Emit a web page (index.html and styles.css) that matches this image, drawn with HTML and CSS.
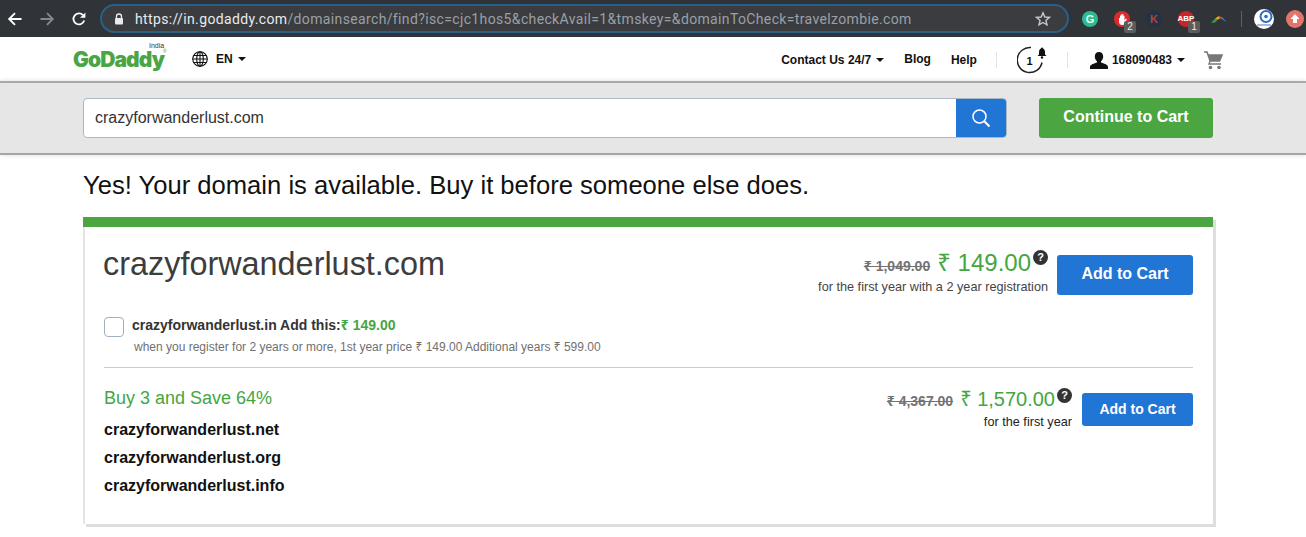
FILE: index.html
```html
<!DOCTYPE html>
<html lang="en">
<head>
<meta charset="utf-8">
<title>GoDaddy Domain Search</title>
<link rel="stylesheet" href="styles.css">
</head>
<body>
<div class="browser">
  <svg class="nav-icon back" width="16" height="16" viewBox="0 0 16 16"><path d="M14.5 8H2.5M8 2.2 2.2 8 8 13.8" fill="none" stroke="#fff" stroke-width="1.9"/></svg>
  <svg class="nav-icon fwd" width="16" height="16" viewBox="0 0 16 16"><path d="M1.5 8h12M8 2.2 13.8 8 8 13.8" fill="none" stroke="#85878a" stroke-width="1.9"/></svg>
  <svg class="nav-icon reload" width="16" height="16" viewBox="0 0 16 16"><path d="M13.2 9.6A5.5 5.5 0 1 1 12 4.2" fill="none" stroke="#fff" stroke-width="1.8"/><path d="M14.4 1.4v5.4H9z" fill="#fff"/></svg>
  <div class="omnibox">
    <svg class="lock" width="10" height="12" viewBox="0 0 10 12"><path d="M2.5 5V3.5a2.5 2.5 0 0 1 5 0V5" fill="none" stroke="#e8eaed" stroke-width="1.3"/><rect x="1" y="5" width="8" height="6.5" rx="1" fill="#e8eaed"/></svg>
    <div class="url"><span class="url-host">https://in.godaddy.com</span><span class="url-path">/domainsearch/find?isc=cjc1hos5&amp;checkAvail=1&amp;tmskey=&amp;domainToCheck=travelzombie.com</span></div>
    <svg class="star" width="16" height="16" viewBox="0 0 16 16"><path d="M8 1.8 9.8 6l4.6.4-3.5 3 1.1 4.5L8 11.5l-4 2.4 1.1-4.5-3.5-3L6.200 6z" fill="none" stroke="#c4c7c9" stroke-width="1.4"/></svg>
  </div>
  <div class="extensions">
    <div class="ext ext-g">G</div>
    <div class="ext ext-hand"><svg width="16" height="16" viewBox="0 0 16 16"><circle cx="8" cy="8" r="8" fill="#de2a2a"/><path d="M5 7v3.500c0 2 1.300 3.500 3.200 3.500s2.800-1 3.300-2.500l1.300-3.500-1-.4-1.300 2V5H9.700V3.500H8.500V3H7.300v1.500H6V7z" fill="#fff"/></svg><span class="badge">2</span></div>
    <div class="ext ext-k">K</div>
    <div class="ext ext-abp"><svg width="16" height="16" viewBox="0 0 16 16"><circle cx="8" cy="8" r="8" fill="#c8242c"/></svg><span class="abp-label">ABP</span><span class="badge">1</span></div>
    <svg class="ext-arc" width="18" height="10" viewBox="0 0 18 10"><path d="M1 9 5 4.500l3 1-3 3z" fill="#3e9b46"/><path d="M5 4.500 9 2l1 2.500-2 1z" fill="#e0b128"/><path d="M9 2l3 1 0 2-2-.500z" fill="#c9473c"/><path d="M12 3l5 5.500-5-3.500z" fill="#5a82c7"/></svg>
    <div class="ext-divider"></div>
    <svg class="ext-swirl" width="20" height="20" viewBox="0 0 20 20"><circle cx="10" cy="10" r="10" fill="#fff"/><circle cx="12" cy="7.500" r="5.500" fill="none" stroke="#2b6cc4" stroke-width="2"/><circle cx="12" cy="7.500" r="1.800" fill="#2b6cc4"/><path d="M3 16h14" stroke="#8aa6cf" stroke-width="1.500"/></svg>
    <svg class="ext-up" width="18" height="18" viewBox="0 0 18 18"><circle cx="9" cy="9" r="9" fill="#e5746b"/><path d="M9 4 13.500 9H11v4H7V9H4.500z" fill="#fff"/></svg>
  </div>
</div>

<header class="site-header">
  <div class="logo"><span class="logo-india">India</span><span class="logo-word">GoDaddy</span><span class="logo-reg">®</span></div>
  <div class="lang">
    <svg width="16" height="16" viewBox="0 0 16 16" fill="none" stroke="#111" stroke-width="1.100"><circle cx="8" cy="8" r="7.300"/><ellipse cx="8" cy="8" rx="3.300" ry="7.300"/><path d="M8 .7v14.600M.7 8h14.600M1.700 4.500h12.600M1.700 11.500h12.600"/></svg>
    <span class="lang-text">EN</span><span class="caret"></span>
  </div>
  <nav class="nav">
    <span class="nav-item">Contact Us 24/7<span class="caret"></span></span>
    <span class="nav-item nav-blog">Blog</span>
    <span class="nav-item nav-help">Help</span>
    <span class="nav-sep"></span>
    <svg class="bell" width="32" height="30" viewBox="0 0 32 30"><path d="M14 2.600A12.500 12.500 0 1 0 25 17.500" fill="none" stroke="#222" stroke-width="1.500"/><path d="M25 2.500a1 1 0 0 1 1 1c1.500.5 2 2 2 3.500v2.500l1.500 1.500h-9l1.500-1.500V7c0-1.500.5-3 2-3.500a1 1 0 0 1 1-1z" fill="#111"/><circle cx="25" cy="12.500" r="1.200" fill="#111"/><text x="12.500" y="19.500" text-anchor="middle" class="bell-num">1</text></svg>
    <span class="nav-sep nav-sep2"></span>
    <svg class="user" width="18" height="17" viewBox="0 0 18 17"><path d="M9 0c2.700 0 4.200 2 4.200 4.500 0 2-1 3.800-2.200 4.800v1.200c2.500 1 7 1.800 7 4.500v2H0v-2c0-2.700 4.500-3.500 7-4.500V9.300C5.800 8.300 4.800 6.500 4.800 4.500 4.800 2 6.300 0 9 0z" fill="#111"/></svg>
    <span class="nav-item nav-account">168090483<span class="caret"></span></span>
    <svg class="cart" width="19" height="19" viewBox="0 0 19 19"><path d="M0 1h3l3.200 9h9.300L18 4H4.500" fill="none" stroke="#777" stroke-width="1.600"/><path d="M4.500 4H18l-2.500 6H6.500z" fill="#777"/><path d="M6 10l-1 3h12" fill="none" stroke="#777" stroke-width="1.400"/><circle cx="6.500" cy="16.500" r="1.800" fill="#777"/><circle cx="15" cy="16.500" r="1.800" fill="#777"/></svg>
  </nav>
</header>

<section class="search-band">
  <div class="search-box">
    <div class="search-input">crazyforwanderlust.com</div>
    <div class="search-btn"><svg width="20" height="20" viewBox="0 0 20 20"><circle cx="8.500" cy="8.500" r="6.500" fill="none" stroke="#fff" stroke-width="1.500"/><path d="M13.300 13.300 18.500 18.500" stroke="#fff" stroke-width="2"/></svg></div>
  </div>
  <div class="continue-btn">Continue to Cart</div>
</section>

<main class="content">
  <h1 class="headline">Yes! Your domain is available. Buy it before someone else does.</h1>
  <div class="card">
    <div class="card-bar"></div>
    <div class="card-body">
      <div class="row-main">
        <div class="domain-title">crazyforwanderlust.com</div>
        <div class="price-group">
          <div class="price-block price-block-lg">
            <div class="price-line"><span class="old-price">₹ 1,049.00</span><span class="new-price">₹ 149.00</span><span class="help-dot">?</span></div>
            <div class="price-note">for the first year with a 2 year registration</div>
          </div>
          <div class="btn btn-lg">Add to Cart</div>
        </div>
      </div>
      <div class="addon">
        <span class="checkbox"></span>
        <div class="addon-text">
          <div class="addon-title">crazyforwanderlust.in Add this:<span class="addon-price">₹ 149.00</span></div>
          <div class="addon-note">when you register for 2 years or more, 1st year price ₹ 149.00 Additional years ₹ 599.00</div>
        </div>
      </div>
      <div class="bundle">
        <div class="bundle-left">
          <div class="bundle-title">Buy 3 and Save 64%</div>
          <div class="bundle-domain">crazyforwanderlust.net</div>
          <div class="bundle-domain">crazyforwanderlust.org</div>
          <div class="bundle-domain">crazyforwanderlust.info</div>
        </div>
        <div class="price-group">
          <div class="price-block price-block-sm">
            <div class="price-line"><span class="old-price">₹ 4,367.00</span><span class="new-price new-price-sm">₹ 1,570.00</span><span class="help-dot">?</span></div>
            <div class="price-note price-note-dark">for the first year</div>
          </div>
          <div class="btn btn-sm">Add to Cart</div>
        </div>
      </div>
    </div>
  </div>
</main>
</body>
</html>
```
FILE: styles.css
```css
* { box-sizing: border-box; }
html, body { margin: 0; padding: 0; }
body {
  width: 1306px;
  height: 537px;
  overflow: hidden;
  background: #fff;
  font-family: "Liberation Sans", "Noto Sans", Arial, sans-serif;
  color: #111;
}

/* Browser chrome */
.browser {
  height: 37px;
  background: #303337;
  display: flex;
  align-items: center;
}
.nav-icon { flex: none; }
.back { margin-left: 7px; }
.fwd { margin-left: 16px; }
.reload { margin-left: 16px; }
.omnibox {
  flex: none;
  width: 969px;
  height: 29px;
  margin-left: 13px;
  padding: 0 16px 0 12px;
  border: 2px solid #2a5f88;
  border-radius: 15px;
  background: #3a3c40;
  display: flex;
  align-items: center;
}
.lock { flex: none; }
.url {
  flex: 1;
  margin-left: 11px;
  font-family: "Roboto", "Liberation Sans", sans-serif;
  font-size: 14px;
  letter-spacing: .36px;
  white-space: nowrap;
}
.url-host { color: #e8eaed; }
.url-path { color: #9aa0a6; }
.star { flex: none; }
.extensions {
  flex: 1;
  display: flex;
  align-items: center;
  padding-left: 13px;
}
.ext {
  flex: none;
  position: relative;
  width: 16px;
  height: 16px;
  border-radius: 50%;
  font-size: 11px;
  font-weight: 700;
  text-align: center;
  line-height: 16px;
}
.ext svg { display: block; }
.ext-g { background: #2fb98f; color: #e8fff6; }
.ext-hand { margin-left: 16px; }
.ext-k { margin-left: 16px; background: #253245; color: #a8483f; }
.ext-abp { margin-left: 16px; }
.abp-label {
  position: absolute;
  left: -1px;
  top: 0;
  width: 18px;
  font-size: 8px;
  color: #fff;
  line-height: 16px;
}
.badge {
  position: absolute;
  left: 10px;
  top: 10px;
  width: 12px;
  height: 12px;
  border-radius: 2px;
  background: #5c5c5c;
  color: #eee;
  font-size: 10px;
  font-weight: 400;
  line-height: 12px;
}
.ext-arc { flex: none; margin-left: 16px; }
.ext-divider { flex: none; width: 1px; height: 16px; margin-left: 13px; background: #5f6063; }
.ext-swirl { flex: none; margin-left: 12px; }
.ext-up { flex: none; margin-left: 12px; }

/* Site header */
.site-header {
  height: 44px;
  padding: 0 83px 0 73px;
  display: flex;
  align-items: center;
}
.logo {
  position: relative;
  width: 119px;
  flex: none;
  height: 30px;
  display: flex;
  align-items: flex-end;
}
.logo-india {
  position: absolute;
  left: 76px;
  top: -2px;
  font-size: 7px;
  line-height: 7px;
  color: #333;
}
.logo-word {
  margin-bottom: 4px;
  font-family: "Inter", "Liberation Sans", sans-serif;
  font-weight: 900;
  font-size: 21px;
  letter-spacing: -.9px;
  color: #4ba544;
  line-height: 20px;
}
.logo-reg {
  position: absolute;
  left: 90px;
  top: 5px;
  font-size: 5px;
  line-height: 5px;
  color: #4ba544;
}
.lang { display: flex; align-items: center; flex: none; }
.lang-text { margin-left: 8px; font-size: 12px; font-weight: 700; }
.caret {
  display: inline-block;
  width: 0;
  height: 0;
  margin-left: 5px;
  border-left: 4px solid transparent;
  border-right: 4px solid transparent;
  border-top: 4px solid #111;
  vertical-align: 2px;
}
.nav { margin-left: auto; padding-top: 2px; display: flex; align-items: center; }
.nav-item { font-size: 12px; font-weight: 700; white-space: nowrap; }
.nav-blog { margin-left: 20px; transform: translateY(-1px); }
.nav-help { margin-left: 20px; }
.nav-sep { width: 1px; height: 16px; margin-left: 19px; background: #e3e3e3; }
.nav-sep2 { margin-left: 18px; }
.bell { margin-left: 20px; flex: none; }
.user { margin-left: 22px; flex: none; }
.nav-account { margin-left: 4px; }
.bell-num { font-size: 11px; font-weight: 700; fill: #111; font-family: "Liberation Sans", sans-serif; }
.cart { margin-left: 19px; flex: none; }

/* Search band */
.search-band {
  height: 74px;
  padding: 15px 93px 0 83px;
  background: #e6e6e6;
  border-top: 2px solid #a9a9a9;
  border-bottom: 2px solid #a6a6a6;
  box-shadow: 0 0 5px rgba(0, 0, 0, .14);
  display: flex;
  align-items: flex-start;
  justify-content: space-between;
}
.search-box {
  width: 924px;
  height: 40px;
  display: flex;
  background: #fff;
  border: 1px solid #a9b7c6;
  border-radius: 4px;
  overflow: hidden;
}
.search-input {
  flex: 1;
  padding-left: 11px;
  font-size: 16px;
  line-height: 37px;
  color: #333;
}
.search-btn {
  width: 50px;
  background: #2175d5;
  display: flex;
  align-items: center;
  justify-content: center;
}
.continue-btn {
  width: 174px;
  height: 40px;
  background: #4ba641;
  border-radius: 3px;
  color: #fff;
  font-size: 16px;
  font-weight: 700;
  text-align: center;
  line-height: 37px;
}

/* Content */
.content { padding: 0 93px 0 83px; }
.headline {
  margin: 0;
  padding-top: 16px;
  height: 62px;
  font-size: 25.6px;
  font-weight: 400;
  line-height: 29px;
  color: #111;
}
.card {
  width: 1130px;
  height: 307px;
  display: flex;
  flex-direction: column;
  background: #fff;
  box-shadow: 3px 3px 0 #dedede;
}
.card-bar { flex: none; height: 10px; background: #4ba641; }
.card-body {
  flex: 1;
  border-left: 2px solid #e4e4e4;
  padding: 0 20px 0 19px;
}
.row-main {
  display: flex;
  justify-content: space-between;
  padding-top: 18px;
  height: 77px;
}
.domain-title { margin: 1px 0 0 -1px; font-size: 32.4px; line-height: 37px; color: #3d3d3d; }
.price-group { display: flex; align-items: flex-start; }
.price-block { text-align: right; }
.price-block-lg { padding-top: 3px; }
.price-block-sm { margin-top: -2px; }
.price-line { display: flex; align-items: baseline; justify-content: flex-end; }
.old-price {
  font-size: 14px;
  font-weight: 700;
  color: #737373;
  text-decoration: line-through;
}
.new-price {
  margin-left: 7px;
  font-size: 24px;
  line-height: 30px;
  color: #45a63f;
}
.new-price-sm { font-size: 20px; line-height: 26px; }
.help-dot {
  align-self: flex-start;
  width: 15px;
  height: 15px;
  margin-left: 2px;
  margin-top: 2px;
  border-radius: 50%;
  background: #333;
  color: #fff;
  font-size: 11px;
  font-weight: 700;
  line-height: 15px;
  text-align: center;
}
.price-note { font-size: 12.7px; line-height: 16px; margin-top: 1px; color: #444; }
.price-note-dark { color: #222; margin-top: 2px; }
.btn {
  background: #2175d5;
  border-radius: 3px;
  color: #fff;
  font-weight: 700;
  text-align: center;
}
.btn-lg {
  width: 136px;
  height: 40px;
  margin: 10px 0 0 9px;
  font-size: 16px;
  line-height: 38px;
}
.btn-sm {
  width: 111px;
  height: 33px;
  margin: 5px 0 0 10px;
  font-size: 14px;
  line-height: 32px;
}
.addon {
  height: 64px;
  padding-top: 13px;
  border-bottom: 1px solid #ccc;
  display: flex;
  align-items: flex-start;
}
.checkbox {
  flex: none;
  width: 20px;
  height: 20px;
  background: #fff;
  border: 1px solid #9fb0c0;
  border-radius: 4px;
}
.addon-text { margin-left: 8px; }
.addon-title { font-size: 14px; font-weight: 700; line-height: 16px; color: #333; }
.addon-price { color: #45a63f; }
.addon-note { margin: 7px 0 0 2px; font-size: 12px; line-height: 14px; color: #707070; }
.bundle {
  display: flex;
  justify-content: space-between;
  padding-top: 20px;
}
.bundle-title { font-size: 18px; line-height: 21px; color: #45a63f; margin-bottom: 7px; }
.bundle-domain { font-size: 16px; font-weight: 700; line-height: 28px; color: #111; }
```
